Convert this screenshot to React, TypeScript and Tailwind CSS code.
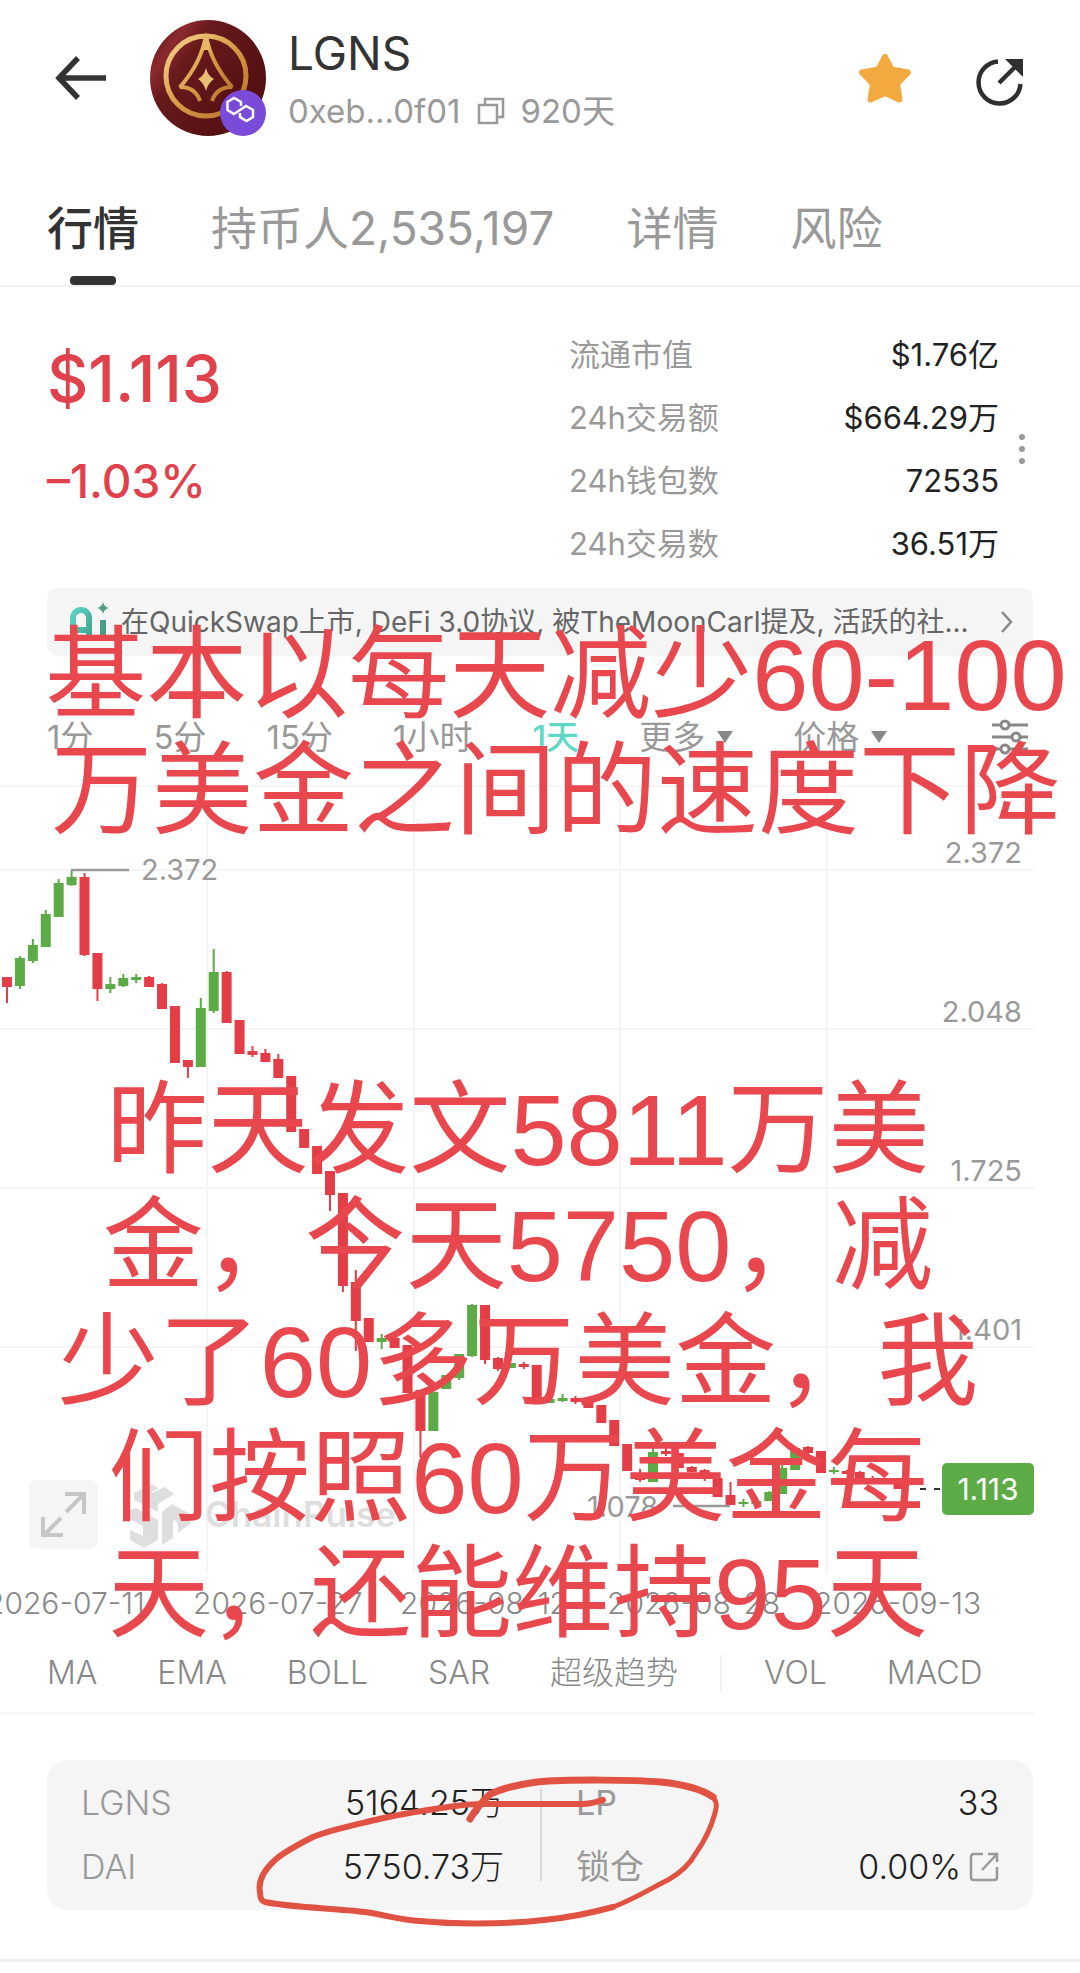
import React, { useState } from "react";

type Candle = [up: number, high: number, top: number, bottom: number, low: number];

const candles: Candle[] = [
  [0, 977, 977, 987, 1003], [1, 956, 958, 986, 989], [1, 939, 945, 961, 963],
  [1, 910, 914, 947, 947], [1, 879, 883, 917, 917], [1, 870, 877, 885, 886],
  [0, 873, 877, 955, 956], [0, 953, 953, 989, 1001], [1, 977, 984, 989, 993],
  [1, 974, 978, 986, 987], [1, 974, 977, 980, 983], [0, 976, 977, 987, 987],
  [0, 983, 984, 1009, 1009], [0, 1006, 1006, 1063, 1063], [0, 1060, 1060, 1067, 1078],
  [1, 998, 1008, 1067, 1067], [1, 949, 972, 1011, 1013], [0, 971, 972, 1023, 1023],
  [0, 1020, 1020, 1054, 1054], [0, 1046, 1051, 1055, 1057], [0, 1049, 1053, 1062, 1062],
  [0, 1054, 1059, 1078, 1078], [0, 1076, 1076, 1132, 1132], [0, 1129, 1129, 1148, 1148],
  [0, 1146, 1146, 1174, 1174], [0, 1171, 1171, 1195, 1211], [0, 1193, 1193, 1286, 1292],
  [0, 1270, 1282, 1321, 1351], [0, 1318, 1318, 1342, 1342], [1, 1334, 1338, 1342, 1349],
  [0, 1338, 1338, 1348, 1348], [0, 1345, 1345, 1393, 1393], [0, 1390, 1390, 1431, 1457],
  [1, 1392, 1392, 1431, 1431], [1, 1375, 1375, 1389, 1389], [1, 1354, 1354, 1378, 1380],
  [1, 1304, 1305, 1356, 1357], [0, 1305, 1305, 1360, 1364], [0, 1357, 1358, 1369, 1371],
  [1, 1363, 1363, 1368, 1368], [0, 1362, 1364, 1367, 1369], [0, 1365, 1365, 1398, 1398],
  [1, 1399, 1399, 1403, 1403], [1, 1394, 1398, 1401, 1402], [0, 1396, 1398, 1402, 1404],
  [0, 1400, 1400, 1408, 1408], [0, 1405, 1405, 1423, 1423], [0, 1420, 1420, 1446, 1446],
  [0, 1444, 1444, 1471, 1471], [0, 1469, 1473, 1480, 1482], [1, 1445, 1452, 1482, 1482],
  [0, 1448, 1451, 1454, 1456], [0, 1453, 1453, 1468, 1468], [0, 1466, 1467, 1472, 1472],
  [0, 1469, 1470, 1479, 1481], [0, 1478, 1478, 1497, 1497], [0, 1482, 1495, 1505, 1505],
  [1, 1499, 1502, 1504, 1507], [1, 1499, 1501, 1504, 1505], [1, 1491, 1492, 1501, 1501],
  [1, 1464, 1468, 1494, 1494], [1, 1448, 1448, 1470, 1470], [0, 1446, 1447, 1453, 1455],
  [0, 1451, 1451, 1473, 1473], [1, 1467, 1470, 1472, 1474], [0, 1470, 1471, 1474, 1474],
  [0, 1471, 1472, 1480, 1480], [0, 1476, 1478, 1482, 1484], [0, 1478, 1478, 1484, 1484],
  [0, 1480, 1480, 1489, 1489],
];

const axisPrices = [
  { label: "2.372", y: 863 },
  { label: "2.048", y: 1022 },
  { label: "1.725", y: 1181 },
  { label: "1.401", y: 1340 },
];

const dates = ["2026-07-11", "2026-07-27", "2026-08-12", "2026-08-28", "2026-09-13"];
const tabs = ["行情", "持币人2,535,197", "详情", "风险"];
const periods = ["1分", "5分", "15分", "1小时", "1天"];
const stats = [
  ["流通市值", "$1.76亿"],
  ["24h交易额", "$664.29万"],
  ["24h钱包数", "72535"],
  ["24h交易数", "36.51万"],
];

const TokenLogo = () => (
  <svg viewBox="0 0 116 116" className="size-[116px] shrink-0">
    <defs>
      <linearGradient id="wine" x1="0" y1="0.1" x2="1" y2="0.8">
        <stop offset="0" stopColor="#5a1014" />
        <stop offset="0.18" stopColor="#8c2a2e" />
        <stop offset="0.32" stopColor="#681a1d" />
        <stop offset="1" stopColor="#4f0d0f" />
      </linearGradient>
      <linearGradient id="gold" x1="0" y1="0" x2="1" y2="1">
        <stop offset="0" stopColor="#f6d590" />
        <stop offset="0.5" stopColor="#d99a45" />
        <stop offset="1" stopColor="#b56f2a" />
      </linearGradient>
    </defs>
    <circle cx="58" cy="58" r="58" fill="url(#wine)" />
    <circle cx="56" cy="56" r="40" fill="none" stroke="url(#gold)" strokeWidth="5" />
    <path
      d="M56 15C53 33 44 51 30 67C40 67 47 72 50 81 M56 15C59 33 68 51 82 67C72 67 65 72 62 81"
      fill="none"
      stroke="url(#gold)"
      strokeWidth="4"
      strokeLinejoin="bevel"
    />
    <path d="M56 12L52 30H60Z" fill="#e8b767" />
    <path d="M56 48Q58 56 64 59Q58 63 56 71Q54 63 48 59Q54 56 56 48Z" fill="#e9bd72" />
    <circle cx="93" cy="93" r="23" fill="#7a4ad8" />
    <path
      d="M91 86V82L84 78L77.500 82V90L84 94L96 86L103 90V97L96.500 101L90 97V93"
      fill="none"
      stroke="white"
      strokeWidth="2.500"
    />
  </svg>
);

const Header = () => (
  <header className="flex h-[164px] items-start pr-[56px] pl-[52px] pt-5">
    <button aria-label="返回" className="mt-8 mr-[38px] shrink-0">
      <svg viewBox="0 0 60 52" className="h-[52px] w-[60px]" fill="none" stroke="#333" strokeWidth="5.500">
        <path d="M54 26H7 M26 6L7 26L26 46" />
      </svg>
    </button>
    <TokenLogo />
    <div className="ml-[22px] flex-1 pt-[5px]">
      <h1 className="text-[46px] leading-[56px] text-[#333]">LGNS</h1>
      <div className="flex items-center text-[33px] leading-[60px] text-[#999]">
        <span>0xeb...0f01</span>
        <button aria-label="复制" className="mx-4">
          <svg viewBox="0 0 28 28" className="size-7" fill="none" stroke="#999" strokeWidth="2.500">
            <path d="M2 8H20V26H2Z M8 8V2H26V20H20" />
          </svg>
        </button>
        <span>920天</span>
      </div>
    </div>
    <div className="flex items-center gap-[64px] pt-[30px]">
      <button aria-label="收藏">
        <svg viewBox="0 0 54 54" className="size-[54px]" fill="#f2a940" stroke="#f2a940" strokeWidth="6" strokeLinejoin="round">
          <path d="M27 6L33.500 18.500L50 21.500L39 33L41.500 48.500L27 42L12.500 48.500L15 33L4 21.500L20.500 18.500Z" />
        </svg>
      </button>
      <button aria-label="分享" className="mt-2">
        <svg viewBox="0 0 48 48" className="size-12" fill="none" stroke="#2f2f2f" strokeWidth="4.500">
          <path d="M22 3.500A21 21 0 1 0 44.500 26" />
          <path d="M23 25L39 9" />
          <path d="M29 1H47V19Z" fill="#2f2f2f" stroke="none" />
        </svg>
      </button>
    </div>
  </header>
);

const AiSummary = () => (
  <button className="flex h-[68px] w-full items-center rounded-xl bg-[#f5f5f5] pr-5 pl-5 text-left">
    <svg viewBox="0 0 44 40" className="h-10 w-11 shrink-0">
      <defs>
        <linearGradient id="mint" x1="0" y1="0" x2="1" y2="1">
          <stop offset="0" stopColor="#5ed3c3" />
          <stop offset="1" stopColor="#3da58f" />
        </linearGradient>
      </defs>
      <path d="M6 38V16a8 8 0 0 1 16 0V38 M6 28H22" fill="none" stroke="url(#mint)" strokeWidth="6" />
      <path d="M33 18H39V38H33Z" fill="#4a9c86" />
      <path d="M36 0Q37 5 42 6Q37 7 36 12Q35 7 30 6Q35 5 36 0Z" fill="#4a9c86" />
    </svg>
    <span className="ml-[10px] min-w-0 flex-1 truncate text-[28px] leading-[40px] text-[#666]">
      在QuickSwap上市, DeFi 3.0协议, 被TheMoonCarl提及, 活跃的社...
    </span>
    <svg viewBox="0 0 12 22" className="h-[22px] w-3 shrink-0" fill="none" stroke="#888" strokeWidth="2.500">
      <path d="M1 1L10 11L1 21" />
    </svg>
  </button>
);

const PriceChart = () => (
  <div className="relative">
    <svg viewBox="0 785 1080 788" className="block w-full">
      <g stroke="#f5f5f5" strokeWidth="2">
        {[786, 870, 1029, 1188, 1347].map((y) => (
          <line key={y} x1="0" x2="1034" y1={y} y2={y} />
        ))}
        {[207, 414, 620, 827].map((x) => (
          <line key={x} x1={x} x2={x} y1="785" y2="1573" />
        ))}
      </g>
      <g fill="#dedede">
        <path d="M134 1493L152 1484L158 1488L148 1495L165 1487L174 1494L158 1504V1512L134 1500Z" />
        <path d="M130 1510L136 1508L158 1520V1540L144 1548L130 1540V1530L143 1536V1526L130 1519Z" />
        <path d="M162 1512L172 1504L190 1514V1524L178 1533V1522L173 1520V1538L162 1545Z" />
        <text x="205" y="1527" fontSize="35" fontWeight="600">ChainPulse</text>
      </g>
      {candles.map(([up, high, top, bottom, low], i) => {
        const x = 7 + i * 12.92;
        return (
          <g key={i} fill={up ? "#5dab47" : "#e33e47"}>
            <rect x={x - 1} y={high} width="2" height={low - high} />
            <rect x={x - 5} y={top} width="10" height={bottom - top} />
          </g>
        );
      })}
      <path d="M71 870H129 M673 1506H730" stroke="#999" strokeWidth="2.500" />
      <path d="M920 1489H942" stroke="#333" strokeWidth="2" strokeDasharray="6 8" />
      <g fontSize="29" fill="#999">
        <text x="141" y="880">2.372</text>
        <text x="587" y="1517">1.078</text>
        {axisPrices.map(({ label, y }) => (
          <text key={label} x="1022" y={y} textAnchor="end">
            {label}
          </text>
        ))}
      </g>
      <rect x="942" y="1463" width="92" height="52" rx="5" fill="#5dab47" />
      <text x="988" y="1500" fontSize="30" fill="white" textAnchor="middle">
        1.113
      </text>
    </svg>
    <button
      aria-label="全屏"
      className="absolute bottom-6 left-[29px] flex size-[69px] items-center justify-center rounded-lg bg-[#f5f5f5]"
    >
      <svg viewBox="0 0 46 46" className="size-[46px]" fill="none" stroke="#c6c6c6" strokeWidth="4">
        <path d="M24 2H43V22 M43 2L25 20 M2 25V43H22 M3 43L20 26" />
      </svg>
    </button>
  </div>
);

const Pool = () => (
  <section className="relative mx-[47px] mt-[46px] flex rounded-[20px] bg-[#f5f5f5] px-[34px] py-[11px] text-[34px] leading-[64px] text-[#999]">
    <dl className="flex-1 pr-9">
      <div className="flex justify-between">
        <dt className="font-light">LGNS</dt>
        <dd className="font-light text-[#222]">5164.25万</dd>
      </div>
      <div className="flex justify-between">
        <dt className="font-light">DAI</dt>
        <dd className="font-light text-[#222]">5750.73万</dd>
      </div>
    </dl>
    <div className="my-[18px] w-[2px] bg-[#d8d8d8]" />
    <dl className="flex-1 pl-[34px]">
      <div className="flex justify-between">
        <dt>LP</dt>
        <dd className="font-light text-[#222]">33</dd>
      </div>
      <div className="flex justify-between">
        <dt>锁仓</dt>
        <dd className="flex items-center gap-2 font-light text-[#222]">
          0.00%
          <a href="#lock" aria-label="查看锁仓">
            <svg viewBox="0 0 30 30" className="size-[30px]" fill="none" stroke="#999" strokeWidth="2.500">
              <path d="M14 2H5Q2 2 2 5V25Q2 28 5 28H25Q28 28 28 25V15 M19 2H28V10 M28 2L13 18" />
            </svg>
          </a>
        </dd>
      </div>
    </dl>
    <svg
      viewBox="0 0 480 160"
      className="pointer-events-none absolute top-[14px] left-[203px] h-[160px] w-[480px]"
      fill="none"
      stroke="#e05242"
      strokeLinecap="round"
      strokeLinejoin="round"
    >
      <path
        strokeWidth="6"
        d="M353 26C346 28 340 30 332 30H232C215 30 205 32 198 33C170 37 145 41 125 46C100 52 80 56 63 63C45 72 34 78 25 86C13 97 8 108 10 118C10 124 11 127 15 128C45 134 85 134 115 138C140 142 150 146 170 147C200 150 250 151 294 146C325 143 345 138 363 133"
      />
      <path strokeWidth="5" d="M363 133C385 125 405 112 418 106C432 98 440 90 446 79C456 65 462 50 465 39C467 32 467 28 463 23" />
      <path strokeWidth="7" d="M463 23C450 14 430 10 411 8C385 6 320 5 287 8C265 11 250 15 239 21C232 28 225 36 220 45" />
    </svg>
  </section>
);

const App = () => {
  const [tab, setTab] = useState(tabs[0]);
  const [period, setPeriod] = useState("1天");

  return (
    <div className="min-h-screen overflow-hidden bg-white font-[Inter,'Noto_Sans_CJK_SC',sans-serif]">
      <Header />

      <nav className="flex items-start gap-[72px] border-b-2 border-[#f2f2f2] px-[47px] pt-8">
        {tabs.map((name) => (
          <button
            key={name}
            onClick={() => setTab(name)}
            className={
              name === tab
                ? "text-[46px] leading-[64px] font-medium text-[#333]"
                : "text-[46px] leading-[64px] text-[#999]"
            }
          >
            {name}
            {name === tab && <span className="mx-auto mt-4 block h-[9px] w-[46px] rounded bg-[#333]" />}
          </button>
        ))}
      </nav>

      <section className="flex justify-between pr-[55px] pl-[47px] pt-9">
        <div className="font-medium text-[#e0414b]">
          <p className="text-[64px] leading-[112px]">$1.113</p>
          <p className="text-[46px] leading-[92px]">–1.03%</p>
        </div>
        <div className="flex items-center">
          <dl className="w-[430px] text-[31px] leading-[63px]">
            {stats.map(([label, value]) => (
              <div key={label} className="flex justify-between">
                <dt className="text-[#999]">{label}</dt>
                <dd className="text-[#222]">{value}</dd>
              </div>
            ))}
          </dl>
          <button aria-label="更多数据" className="ml-5 flex flex-col gap-[6px]">
            <span className="size-[6px] rounded-full bg-[#999]" />
            <span className="size-[6px] rounded-full bg-[#999]" />
            <span className="size-[6px] rounded-full bg-[#999]" />
          </button>
        </div>
      </section>

      <main className="relative mt-[13px]">
        <div className="px-[47px]">
          <AiSummary />
        </div>

        <div className="mt-[49px] mb-4 flex items-center gap-[60px] pr-[52px] pl-[47px] text-[33px] leading-[64px] text-[#999]">
          {periods.map((name) => (
            <button
              key={name}
              onClick={() => setPeriod(name)}
              className={name === period ? "font-medium text-[#5fd9c6]" : ""}
            >
              {name}
            </button>
          ))}
          <button className="flex items-center gap-3">
            更多
            <svg viewBox="0 0 16 12" className="h-3 w-4" fill="#888">
              <path d="M0 0H16L8 12Z" />
            </svg>
          </button>
          <button className="flex items-center gap-3">
            价格
            <svg viewBox="0 0 16 12" className="h-3 w-4" fill="#888">
              <path d="M0 0H16L8 12Z" />
            </svg>
          </button>
          <button aria-label="图表设置" className="ml-auto">
            <svg viewBox="0 0 36 36" className="size-9" fill="white" stroke="#888" strokeWidth="3">
              <path d="M0 6H36 M0 18H36 M0 30H36" />
              <circle cx="13" cy="6" r="4" />
              <circle cx="24" cy="18" r="4" />
              <circle cx="13" cy="30" r="4" />
            </svg>
          </button>
        </div>

        <PriceChart />

        <div className="-ml-[14px] flex pt-[10px] text-[30px] leading-[40px] font-light text-[#888]">
          {dates.map((date) => (
            <span key={date} className="w-[207px] shrink-0">
              {date}
            </span>
          ))}
        </div>

        {/* handwritten-style notes laid over the chart */}
        <p className="pointer-events-none absolute top-[29px] left-4 w-full text-center font-['Liberation_Sans','Noto_Sans_CJK_SC',sans-serif] text-[101px] leading-[116px] whitespace-nowrap text-[#e8474e]">
          基本以每天减少60-100
          <br />
          万美金之间的速度下降
        </p>
        <p className="pointer-events-none absolute top-[484px] right-[22px] w-full text-center font-['Liberation_Sans','Noto_Sans_CJK_SC',sans-serif] text-[101px] leading-[116px] whitespace-nowrap text-[#e8474e]">
          昨天发文5811万美
          <br />
          金，今天5750，减
          <br />
          少了60多万美金，我
          <br />
          们按照60万美金每
          <br />
          天，还能维持95天
        </p>
      </main>

      <div className="mr-[46px] flex items-center gap-[60px] border-b-2 border-[#f5f5f5] pt-[18px] pb-[7px] pl-[47px] text-[32px] leading-[64px] font-light text-[#888]">
        <button>MA</button>
        <button>EMA</button>
        <button>BOLL</button>
        <button>SAR</button>
        <button>超级趋势</button>
        <span className="-mx-[18px] h-9 w-[2px] bg-[#f0f0f0]" />
        <button>VOL</button>
        <button>MACD</button>
      </div>

      <Pool />
      <div className="mt-[49px] h-[3px] bg-[#f0f0f0]" />
    </div>
  );
};

export default App;
